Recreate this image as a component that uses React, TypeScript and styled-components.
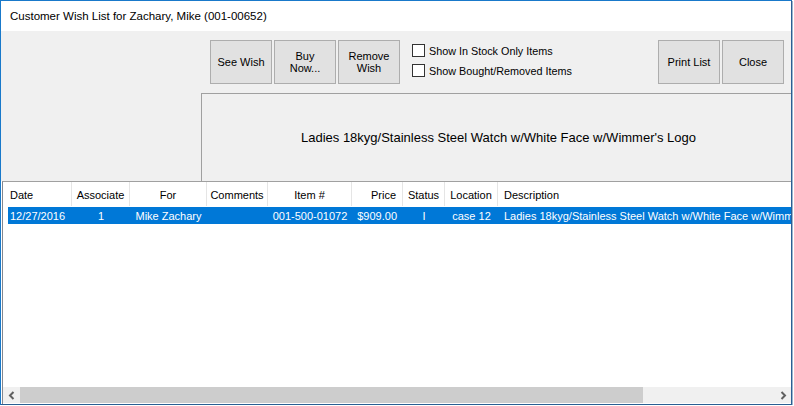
import React from "react";
import styled, { createGlobalStyle } from "styled-components";

const GlobalStyle = createGlobalStyle`
  html, body {
    margin: 0;
    padding: 0;
    background: #ffffff;
  }
  body {
    font-family: "Liberation Sans", Arial, sans-serif;
    color: #000;
  }
`;

type Align = "left" | "center" | "right";

interface Column {
  title: string;
  width: number;
  align: Align;
}

const columns: Column[] = [
  { title: "Date", width: 68, align: "left" },
  { title: "Associate", width: 58, align: "center" },
  { title: "For", width: 77, align: "center" },
  { title: "Comments", width: 61, align: "center" },
  { title: "Item #", width: 84, align: "center" },
  { title: "Price", width: 51, align: "right" },
  { title: "Status", width: 42, align: "center" },
  { title: "Location", width: 53, align: "center" },
  { title: "Description", width: 320, align: "left" },
];

const rows: string[][] = [
  [
    "12/27/2016",
    "1",
    "Mike Zachary",
    "",
    "001-500-01072",
    "$909.00",
    "I",
    "case 12",
    "Ladies 18kyg/Stainless Steel Watch w/White Face w/Wimmer's Logo",
  ],
];

const Window = styled.div`
  width: 790px;
  height: 403px;
  border-top: 1px solid #1979ca;
  border-left: 1px solid #1979ca;
  border-right: 1px solid #2a5f93;
  border-bottom: 1px solid #2a5f93;
  box-shadow: 1px 1px 0 #9db4cc;
  display: flex;
  flex-direction: column;
  overflow: hidden;
  background: #fff;
`;

const TitleBar = styled.div`
  height: 30px;
  flex: none;
  display: flex;
  align-items: center;
  padding-left: 9px;
  font-size: 11.5px;
  background: #fff;
`;

const Panel = styled.div`
  height: 150px;
  flex: none;
  background: #f0f0f0;
  display: flex;
  flex-direction: column;
`;

const Toolbar = styled.div`
  height: 62px;
  flex: none;
  display: flex;
  align-items: flex-start;
  padding-top: 9px;
  padding-left: 209px;
  padding-right: 7px;
  box-sizing: border-box;
`;

const ButtonGroup = styled.div`
  display: flex;
  gap: 2px;
`;

const Button = styled.button`
  width: 62px;
  height: 44px;
  box-sizing: border-box;
  border: 1px solid #adadad;
  background: #e1e1e1;
  font-family: "Liberation Sans", Arial, sans-serif;
  font-size: 11px;
  line-height: 12px;
  color: #000;
  padding: 0;
  display: flex;
  align-items: center;
  justify-content: center;
  text-align: center;
`;

const Options = styled.div`
  display: flex;
  flex-direction: column;
  gap: 7px;
  margin-left: 12px;
  padding-top: 4px;
`;

const Option = styled.label`
  display: flex;
  align-items: center;
  gap: 4px;
  font-size: 10.8px;
  height: 13px;
`;

const Box = styled.span`
  width: 13px;
  height: 13px;
  box-sizing: border-box;
  border: 1px solid #333;
  background: #fff;
  flex: none;
`;

const Spacer = styled.div`
  flex: 1;
`;

const DescriptionRow = styled.div`
  flex: 1;
  display: flex;
  padding-left: 200px;
`;

const DescriptionBox = styled.div`
  flex: 1;
  border-top: 1px solid #a0a0a0;
  border-left: 1px solid #a0a0a0;
  display: flex;
  align-items: center;
  justify-content: center;
  font-size: 13px;
  padding-left: 4px;
  padding-bottom: 1px;
`;

const ListView = styled.div`
  flex: 1;
  display: flex;
  flex-direction: column;
  border-top: 1px solid #a0a0a0;
  border-left: 1px solid #828790;
  margin-left: 1px;
  background: #fff;
  min-height: 0;
  overflow: hidden;
`;

const HeaderRow = styled.div`
  height: 24px;
  flex: none;
  display: flex;
  padding-left: 1px;
`;

const HeaderCell = styled.div<{ $w: number; $align: Align }>`
  width: ${(p) => p.$w}px;
  flex: none;
  box-sizing: border-box;
  border-right: 1px solid #e5e5e5;
  padding: 2px 6px 0;
  font-size: 11px;
  display: flex;
  align-items: center;
  justify-content: ${(p) =>
    p.$align === "left" ? "flex-start" : p.$align === "right" ? "flex-end" : "center"};
  white-space: nowrap;
`;

const Body = styled.div`
  flex: 1;
  padding-top: 1px;
`;

const DataRow = styled.div<{ $selected?: boolean }>`
  height: 17px;
  display: flex;
  margin-left: 5px;
  background: ${(p) => (p.$selected ? "#0078d7" : "transparent")};
  color: ${(p) => (p.$selected ? "#fff" : "#000")};
  overflow: hidden;
`;

const DataCell = styled.div<{ $w: number; $align: Align; $first?: boolean }>`
  width: ${(p) => (p.$first ? p.$w - 4 : p.$w)}px;
  flex: none;
  box-sizing: border-box;
  padding: 0 6px 0 ${(p) => (p.$first ? 2 : 6)}px;
  font-size: 11px;
  display: flex;
  align-items: center;
  justify-content: ${(p) =>
    p.$align === "left" ? "flex-start" : p.$align === "right" ? "flex-end" : "center"};
  white-space: nowrap;
  overflow: hidden;
`;

const ScrollBar = styled.div`
  height: 16px;
  flex: none;
  display: flex;
  background: #f0f0f0;
  margin-bottom: 1px;
`;

const Arrow = styled.div`
  width: 17px;
  flex: none;
  display: flex;
  align-items: center;
  justify-content: center;
`;

const Track = styled.div`
  flex: 1;
  display: flex;
`;

const Thumb = styled.div`
  width: 623px;
  background: #cdcdcd;
`;

const Chevron = ({ dir }: { dir: "left" | "right" }) => (
  <svg width="8" height="9" viewBox="0 0 8 9">
    <polyline
      points={dir === "left" ? "5.5,1 2,4.5 5.5,8" : "2.5,1 6,4.5 2.5,8"}
      fill="none"
      stroke="#606060"
      strokeWidth="2"
    />
  </svg>
);

export default function App() {
  return (
    <>
      <GlobalStyle />
      <Window>
        <TitleBar>Customer Wish List for Zachary, Mike (001-00652)</TitleBar>
        <Panel>
          <Toolbar>
            <ButtonGroup>
              <Button>See Wish</Button>
              <Button>
                Buy
                <br />
                Now...
              </Button>
              <Button>
                Remove
                <br />
                Wish
              </Button>
            </ButtonGroup>
            <Options>
              <Option>
                <Box />
                Show In Stock Only Items
              </Option>
              <Option>
                <Box />
                Show Bought/Removed Items
              </Option>
            </Options>
            <Spacer />
            <ButtonGroup>
              <Button>Print List</Button>
              <Button>Close</Button>
            </ButtonGroup>
          </Toolbar>
          <DescriptionRow>
            <DescriptionBox>
              Ladies 18kyg/Stainless Steel Watch w/White Face w/Wimmer's Logo
            </DescriptionBox>
          </DescriptionRow>
        </Panel>
        <ListView>
          <HeaderRow>
            {columns.map((c) => (
              <HeaderCell key={c.title} $w={c.width} $align={c.align}>
                {c.title}
              </HeaderCell>
            ))}
          </HeaderRow>
          <Body>
            {rows.map((r, i) => (
              <DataRow key={i} $selected>
                {r.map((v, j) => (
                  <DataCell
                    key={j}
                    $w={columns[j].width}
                    $align={columns[j].align}
                    $first={j === 0}
                  >
                    {v}
                  </DataCell>
                ))}
              </DataRow>
            ))}
          </Body>
          <ScrollBar>
            <Arrow>
              <Chevron dir="left" />
            </Arrow>
            <Track>
              <Thumb />
            </Track>
            <Arrow>
              <Chevron dir="right" />
            </Arrow>
          </ScrollBar>
        </ListView>
      </Window>
    </>
  );
}
